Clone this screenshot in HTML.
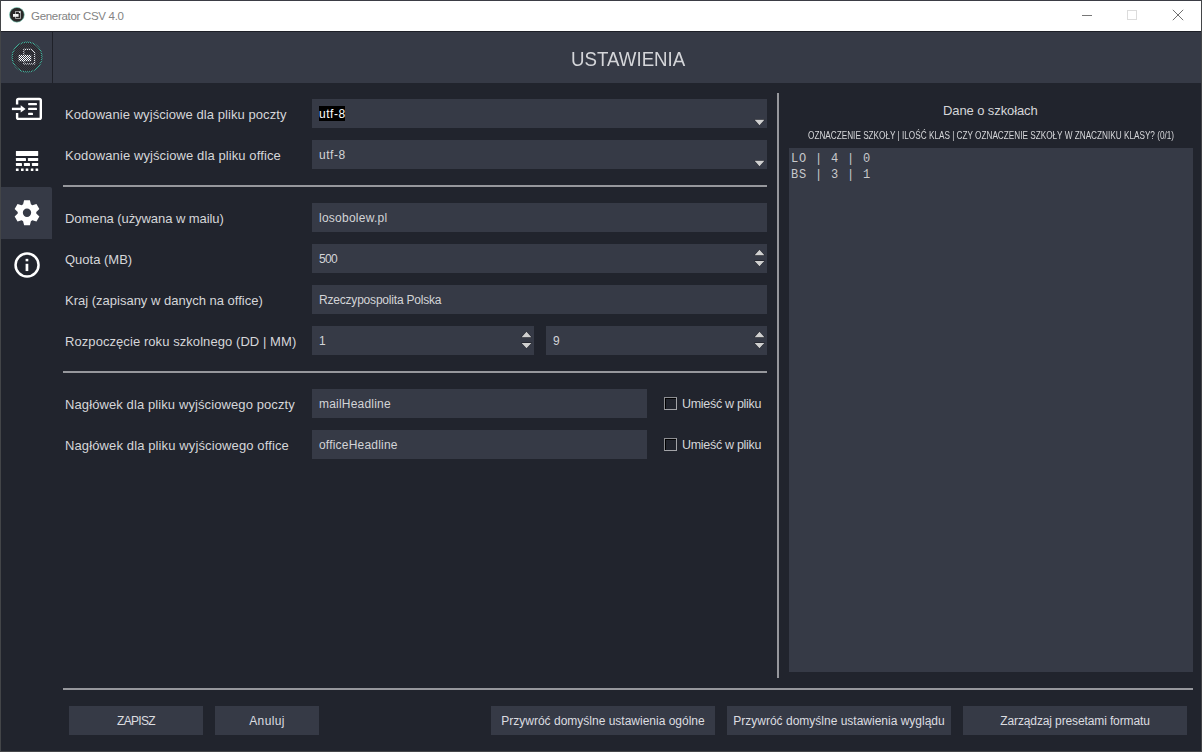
<!DOCTYPE html>
<html><head><meta charset="utf-8">
<style>
*{margin:0;padding:0;box-sizing:border-box}
html,body{width:1202px;height:752px;overflow:hidden;background:#21242d;font-family:"Liberation Sans",sans-serif}
.abs{position:absolute}
.lbl{position:absolute;left:65px;font-size:13px;line-height:15px;color:#d5d6d9;white-space:nowrap}
.inp{position:absolute;background:#363a46;height:29px}
.inp span{position:absolute;left:7px;top:8px;font-size:12px;line-height:14px;color:#d3d4d7;white-space:nowrap;letter-spacing:-0.2px}
.hline{position:absolute;height:2px;background:#96979c}
.btn{position:absolute;top:706px;height:29px;background:#363a46;color:#dcdde0;font-size:12px;text-align:center;line-height:29px;white-space:nowrap}
.btn span{display:inline-block;position:relative;top:1px}
.chk{position:absolute;left:664px;width:13px;height:13px;border:1px solid #8d8e92;border-right-color:#a3a4a8;border-bottom-color:#a3a4a8}
.chk i{position:absolute;left:0;top:0;width:11px;height:11px;border-left:1px solid #000;border-top:1px solid #000}
.chkl{position:absolute;left:682px;margin-top:1px;font-size:12.5px;line-height:15px;color:#d5d6d9;white-space:nowrap;letter-spacing:-0.3px}
</style></head><body>
<!-- window frame -->
<div class="abs" style="left:0;top:0;width:1202px;height:1px;background:#3b3d45"></div>
<div class="abs" style="left:1px;top:1px;width:1200px;height:30px;background:#fff"></div>
<div class="abs" style="left:0;top:0;width:1px;height:752px;background:#434548"></div>
<div class="abs" style="left:1201px;top:0;width:1px;height:752px;background:#434548"></div>
<div class="abs" style="left:1px;top:31px;width:1200px;height:1px;background:#1d1f27"></div>
<div class="abs" style="left:0;top:751px;width:1202px;height:1px;background:#454649"></div>
<div class="abs" style="left:1px;top:32px;width:1200px;height:51px;background:#363a46"></div>
<div class="abs" style="left:52px;top:32px;width:1px;height:51px;background:#1f2129"></div>

<!-- title bar -->
<svg class="abs" style="left:0;top:0" width="40" height="31" viewBox="0 0 40 31">
  <circle cx="16.9" cy="14.8" r="7.4" fill="#2b2929" stroke="#7fd6c2" stroke-width="0.6"/>
  <rect x="15.6" y="11.5" width="4.8" height="6.9" fill="none" stroke="#bdbdbd" stroke-width="0.8"/>
  <rect x="13" y="14" width="5.6" height="2.8" fill="#f4f4f4"/>
  <circle cx="19.6" cy="12.3" r="0.8" fill="#fff"/>
</svg>
<div class="abs" style="left:31px;top:10px;font-size:11.5px;line-height:13px;color:#838383;letter-spacing:-0.3px;white-space:nowrap">Generator CSV 4.0</div>
<div class="abs" style="left:1082px;top:15px;width:10px;height:1px;background:#777"></div>
<div class="abs" style="left:1127px;top:10px;width:10px;height:10px;border:1px solid #dcdcdc"></div>
<svg class="abs" style="left:1170px;top:8px" width="15" height="15" viewBox="0 0 15 15">
  <path d="M2.8,1.8 L13.2,12.2 M13.2,1.8 L2.8,12.2" stroke="#6f6f6f" stroke-width="1"/>
</svg>

<!-- header -->
<svg class="abs" style="left:0;top:32px" width="52" height="51" viewBox="0 32 52 51">
  <defs>
    <pattern id="chk" patternUnits="userSpaceOnUse" x="0" y="0" width="2" height="2"><rect x="0" y="0" width="1" height="1" fill="#fff"/><rect x="1" y="1" width="1" height="1" fill="#fff"/></pattern>
    <mask id="m1" maskUnits="userSpaceOnUse" x="0" y="32" width="52" height="51"><rect x="0" y="32" width="52" height="51" fill="url(#chk)"/></mask>
  </defs>
  <g mask="url(#m1)">
    <circle cx="27.05" cy="57.05" r="14.9" fill="#2b2729" stroke="#3fb89c" stroke-width="1.2"/>
    <path d="M23.8,49.3 H31 L34.6,52.6 V63.8 H23.8 Z" fill="none" stroke="#e6e6e6" stroke-width="1.2"/>
    <rect x="18.6" y="54.9" width="12.6" height="6.4" fill="#ffffff"/>
  </g>
</svg>
<div class="abs" style="left:571px;top:48px;font-size:20px;line-height:23px;color:#d4d5d9;white-space:nowrap;transform:scaleX(0.935);transform-origin:0 0">USTAWIENIA</div>

<!-- sidebar -->
<div class="abs" style="left:1px;top:187px;width:51px;height:52px;background:#363a46;border-top-right-radius:2px"></div>
<svg class="abs" style="left:0;top:83px" width="52" height="220" viewBox="0 83 52 220">
  <g fill="none" stroke="#fff" stroke-width="2.4">
    <path d="M17.1,104.6 V100.5 Q17.1,99 18.6,99 H39.3 Q40.8,99 40.8,100.5 V117.4 Q40.8,118.9 39.3,118.9 H18.6 Q17.1,118.9 17.1,117.4 V113.1"/>
    <path d="M11.9,108.9 H22"/>
  </g>
  <path d="M20.7,105.2 L25.6,108.9 L20.7,112.5Z" fill="#fff"/>
  <g fill="#fff">
    <rect x="28.1" y="102.9" width="8.9" height="2.4" rx="0.7"/>
    <rect x="28.1" y="107.7" width="8.9" height="2.4" rx="0.7"/>
    <rect x="28.1" y="112.7" width="4.9" height="2.4" rx="0.7"/>
  </g>
  <g fill="#fff">
    <rect x="15.9" y="150.9" width="22.3" height="5.1" rx="0.4"/>
    <rect x="15.9" y="158.1" width="10.1" height="2.9" rx="0.4"/>
    <rect x="27.9" y="158.1" width="10.3" height="2.9" rx="0.4"/>
    <rect x="15.9" y="163.1" width="6.1" height="2.9" rx="0.4"/>
    <rect x="23.9" y="163.1" width="6.1" height="2.9" rx="0.4"/>
    <rect x="31.9" y="163.1" width="6.3" height="2.9" rx="0.4"/>
    <rect x="15.9" y="168.5" width="2.7" height="2.6" rx="0.3"/>
    <rect x="21" y="168.5" width="2.6" height="2.6" rx="0.3"/>
    <rect x="25.7" y="168.5" width="2.6" height="2.6" rx="0.3"/>
    <rect x="30.8" y="168.5" width="2.6" height="2.6" rx="0.3"/>
    <rect x="35.6" y="168.5" width="2.6" height="2.6" rx="0.3"/>
  </g>
  <path fill="#fff" fill-rule="evenodd" d="M23.10,204.31 L24.10,200.15 L29.90,200.15 L30.90,204.31 L32.36,205.15 L36.46,203.94 L39.36,208.96 L36.26,211.91 L36.26,213.59 L39.36,216.54 L36.46,221.56 L32.36,220.35 L30.90,221.19 L29.90,225.35 L24.10,225.35 L23.10,221.19 L21.64,220.35 L17.54,221.56 L14.64,216.54 L17.74,213.59 L17.74,211.91 L14.64,208.96 L17.54,203.94 L21.64,205.15Z M27,208.6 A4.15,4.15 0 1 0 27,216.9 A4.15,4.15 0 1 0 27,208.6Z"/>
  <circle cx="27.05" cy="265.05" r="11.5" fill="none" stroke="#fff" stroke-width="2.5"/>
  <rect x="25.6" y="258.85" width="2.7" height="2.45" fill="#fff"/>
  <rect x="25.6" y="263.8" width="2.7" height="7.25" fill="#fff"/>
</svg>

<!-- labels -->
<div class="lbl" style="top:107px;letter-spacing:0.07px">Kodowanie wyjściowe dla pliku poczty</div>
<div class="lbl" style="top:148px;letter-spacing:0.1px">Kodowanie wyjściowe dla pliku office</div>
<div class="hline" style="left:63px;top:185px;width:704px"></div>
<div class="lbl" style="top:211px;letter-spacing:-0.07px">Domena (używana w mailu)</div>
<div class="lbl" style="top:252px">Quota (MB)</div>
<div class="lbl" style="top:293px">Kraj (zapisany w danych na office)</div>
<div class="lbl" style="top:334px;letter-spacing:0.07px">Rozpoczęcie roku szkolnego (DD | MM)</div>
<div class="hline" style="left:63px;top:371px;width:704px"></div>
<div class="lbl" style="top:397px;letter-spacing:0.1px">Nagłówek dla pliku wyjściowego poczty</div>
<div class="lbl" style="top:438px;letter-spacing:0.12px">Nagłówek dla pliku wyjściowego office</div>

<!-- inputs -->
<div class="inp" style="left:312px;top:99px;width:455px"><div class="abs" style="left:7px;top:7px;width:26px;height:15px;background:#000"></div><span style="color:#fff;letter-spacing:0.55px">utf-8</span></div>
<div class="inp" style="left:312px;top:140px;width:455px"><span style="letter-spacing:0.55px">utf-8</span></div>
<div class="inp" style="left:312px;top:203px;width:455px"><span style="letter-spacing:0.25px">losobolew.pl</span></div>
<div class="inp" style="left:312px;top:244px;width:455px"><span style="letter-spacing:-0.7px">500</span></div>
<div class="inp" style="left:312px;top:285px;width:455px"><span>Rzeczypospolita Polska</span></div>
<div class="inp" style="left:312px;top:326px;width:222px"><span>1</span></div>
<div class="inp" style="left:546px;top:326px;width:221px"><span>9</span></div>
<div class="inp" style="left:312px;top:389px;width:335px"><span style="letter-spacing:0.2px">mailHeadline</span></div>
<div class="inp" style="left:312px;top:430px;width:335px"><span style="letter-spacing:0.2px">officeHeadline</span></div>

<!-- arrows -->
<svg class="abs" style="left:0;top:0" width="780" height="360" viewBox="0 0 780 360">
  <g fill="#d0d0d0" stroke="#1c1e25" stroke-width="1" stroke-linejoin="round" paint-order="stroke">
    <path d="M754.6,119.8 H764.4 L759.5,125.2Z"/>
    <path d="M754.6,160.8 H764.4 L759.5,166.2Z"/>
    <path d="M754.6,255.2 H764.4 L759.5,249.8Z M754.6,260.9 H764.4 L759.5,266.3Z"/>
    <path d="M754.6,337.2 H764.4 L759.5,331.8Z M754.6,342.9 H764.4 L759.5,348.3Z"/>
    <path d="M521.6,337.2 H531.4 L526.5,331.8Z M521.6,342.9 H531.4 L526.5,348.3Z"/>
  </g>
</svg>

<!-- checkboxes -->
<div class="chk" style="top:397px"><i></i></div>
<div class="chkl" style="top:396px">Umieść w pliku</div>
<div class="chk" style="top:438px"><i></i></div>
<div class="chkl" style="top:437px">Umieść w pliku</div>

<!-- separators -->
<div class="abs" style="left:777px;top:93px;width:2px;height:585px;background:#96979c"></div>
<div class="hline" style="left:63px;top:688px;width:1130px"></div>

<!-- right panel -->
<div class="abs" style="left:943px;top:103px;font-size:13px;line-height:15px;color:#d5d6d9;white-space:nowrap;letter-spacing:-0.1px">Dane o szkołach</div>
<div class="abs" style="left:808px;top:130px;font-size:10px;line-height:12px;color:#d5d6d9;white-space:nowrap;transform:scaleX(0.82);transform-origin:0 0">OZNACZENIE SZKOŁY | ILOŚĆ KLAS | CZY OZNACZENIE SZKOŁY W ZNACZNIKU KLASY? (0/1)</div>
<div class="abs" style="left:789px;top:148px;width:404px;height:524px;background:#363a46"></div>
<div class="abs" style="left:791px;top:151px;font-family:'Liberation Mono',monospace;font-size:12px;letter-spacing:0.8px;line-height:16px;color:#c8c9cc;white-space:pre">LO | 4 | 0
BS | 3 | 1</div>

<!-- buttons -->
<div class="btn" style="left:69px;width:134px"><span style="letter-spacing:-0.7px">ZAPISZ</span></div>
<div class="btn" style="left:215px;width:104px"><span style="letter-spacing:0.35px">Anuluj</span></div>
<div class="btn" style="left:491px;width:224px"><span>Przywróć domyślne ustawienia ogólne</span></div>
<div class="btn" style="left:727px;width:224px"><span>Przywróć domyślne ustawienia wyglądu</span></div>
<div class="btn" style="left:963px;width:224px"><span style="letter-spacing:-0.12px">Zarządzaj presetami formatu</span></div>
</body></html>
